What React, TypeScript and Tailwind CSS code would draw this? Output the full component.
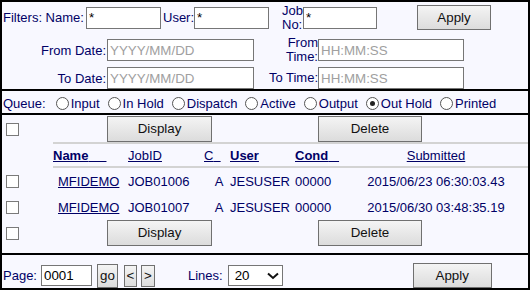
import React from "react";

function Btn({ children, className = "" }: { children: React.ReactNode; className?: string }) {
  return (
    <button
      type="button"
      className={`flex shrink-0 items-center justify-center border border-[#707070] bg-linear-to-b from-[#f4f4f4] to-[#dcdcdc] text-[13.333px] leading-none text-[#111] ${className}`}
    >
      {children}
    </button>
  );
}

function TextBox({ value, placeholder, className = "" }: { value?: string; placeholder?: string; className?: string }) {
  return (
    <input
      readOnly
      value={value ?? ""}
      placeholder={placeholder}
      className={`h-[22px] shrink-0 border border-[#767676] bg-white px-[2px] text-[13.333px] text-black outline-none placeholder:text-[#a0a0a0] ${className}`}
    />
  );
}

function Radio({ label, checked = false, first = false }: { label: string; checked?: boolean; first?: boolean }) {
  return (
    <span className={`flex items-center ${first ? "ml-[10px]" : "ml-[8px]"}`}>
      <span className="flex h-[13px] w-[13px] items-center justify-center rounded-full border border-[#555] bg-white">
        {checked && <span className="block h-[5px] w-[5px] rounded-full bg-[#222]" />}
      </span>
      <span className="ml-[2px]">{label}</span>
    </span>
  );
}

function Check() {
  return <span className="block h-[13px] w-[13px] border border-[#7a7a7a] bg-white" />;
}

function ButtonRow({ top = false }: { top?: boolean }) {
  return (
    <div className={`flex items-center ${top ? "h-[27px] pt-[1px]" : "h-[26px]"}`}>
      <div className="flex w-[105px] shrink-0 pl-[4px]">
        <Check />
      </div>
      <Btn className="h-[26px] w-[105px]">Display</Btn>
      <Btn className="ml-[106px] h-[26px] w-[104px]">Delete</Btn>
    </div>
  );
}

const rows = [
  { name: "MFIDEMO", job: "JOB01006", c: "A", user: "JESUSER", cond: "00000", sub: "2015/06/23 06:30:03.43" },
  { name: "MFIDEMO", job: "JOB01007", c: "A", user: "JESUSER", cond: "00000", sub: "2015/06/30 03:48:35.19" },
];

export default function App() {
  return (
    <div className="h-[290px] w-[530px] bg-white font-['Liberation_Sans',Arial,sans-serif] text-[13px] leading-[15px] text-[#000066]">
      <div className="flex h-[290px] w-[530px] flex-col border-2 border-black bg-[#f8f8ff]">
        {/* Filters */}
        <div className="h-[89px] shrink-0 border-b-2 border-black">
          <div className="flex h-[31px] items-center">
            <span className="w-[84px] shrink-0 pl-[1px]">Filters: Name:</span>
            <TextBox value="*" className="w-[75px]" />
            <span className="ml-[2px] w-[31px] shrink-0">User:</span>
            <TextBox value="*" className="w-[75px]" />
            <span className="ml-[11px] w-[23px] shrink-0 pl-[2px] leading-[14px]">Job No:</span>
            <TextBox value="*" className="w-[74px]" />
            <Btn className="ml-[40px] h-[25px] w-[74px]">Apply</Btn>
          </div>
          <div className="flex h-[34px] items-center">
            <span className="w-[105px] shrink-0 pr-[1px] text-right">From Date:</span>
            <TextBox placeholder="YYYY/MM/DD" className="w-[147px]" />
            <span className="ml-[10px] w-[54px] shrink-0 text-right leading-[14px]">From Time:</span>
            <TextBox placeholder="HH:MM:SS" className="w-[146px]" />
          </div>
          <div className="flex h-[22px] items-center">
            <span className="w-[105px] shrink-0 pr-[1px] text-right">To Date:</span>
            <TextBox placeholder="YYYY/MM/DD" className="w-[147px]" />
            <span className="ml-[10px] w-[54px] shrink-0 text-right leading-[14px]">To Time:</span>
            <TextBox placeholder="HH:MM:SS" className="w-[146px]" />
          </div>
        </div>

        {/* Queue */}
        <div className="flex h-[24px] shrink-0 items-center border-b-2 border-black pt-[3px] pl-[1px]">
          <span>Queue:</span>
          <Radio label="Input" first />
          <Radio label="In Hold" />
          <Radio label="Dispatch" />
          <Radio label="Active" />
          <Radio label="Output" />
          <Radio label="Out Hold" checked />
          <Radio label="Printed" />
        </div>

        {/* Table */}
        <div className="h-[140px] shrink-0 border-b-2 border-black">
          <ButtonRow top />
          <div className="ml-[51px] flex h-[26px] items-center border-y-2 border-[#d3d3d3]">
            <span className="w-[75px] shrink-0 font-bold underline">Name{"\u00a0\u00a0\u00a0\u00a0\u00a0"}</span>
            <span className="w-[76px] shrink-0 underline">JobID</span>
            <span className="w-[26px] shrink-0 underline">C{"\u00a0\u00a0"}</span>
            <span className="w-[65px] shrink-0 font-bold underline">User</span>
            <span className="w-[72px] shrink-0 font-bold underline">Cond{"\u00a0\u00a0\u00a0"}</span>
            <span className="w-[138px] shrink-0 text-center underline">Submitted</span>
          </div>
          {rows.map((r) => (
            <div key={r.job} className="flex h-[26px] items-center">
              <div className="flex w-[51px] shrink-0 pl-[4px]">
                <Check />
              </div>
              <span className="w-[75px] shrink-0 pl-[5px] underline">{r.name}</span>
              <span className="w-[76px] shrink-0">{r.job}</span>
              <span className="w-[26px] shrink-0 pl-[4px] text-center">{r.c}</span>
              <span className="w-[65px] shrink-0">{r.user}</span>
              <span className="w-[72px] shrink-0">{r.cond}</span>
              <span className="w-[138px] shrink-0 text-center">{r.sub}</span>
            </div>
          ))}
          <ButtonRow />
        </div>

        {/* Paging */}
        <div className="flex flex-1 items-center pt-[8px] pl-[1px]">
          <span>Page:</span>
          <input
            readOnly
            value="0001"
            className="ml-[4px] h-[21px] w-[51px] border border-[#767676] bg-white px-[2px] text-[13.333px] text-black outline-none"
          />
          <Btn className="ml-[5px] h-[24px] w-[21px]">go</Btn>
          <Btn className="ml-[6px] h-[22px] w-[13px]">&lt;</Btn>
          <Btn className="ml-[4px] h-[22px] w-[14px]">&gt;</Btn>
          <span className="ml-[33px]">Lines:</span>
          <div className="ml-[5px] flex h-[21px] w-[55px] shrink-0 items-center justify-between border border-[#767676] bg-white pr-[3px] pl-[6px] text-[13.333px] text-black">
            <span>20</span>
            <svg width="12" height="8" viewBox="0 0 12 8" fill="none">
              <path d="M1 1.5 L6 6 L11 1.5" stroke="#111" strokeWidth="2" />
            </svg>
          </div>
          <Btn className="ml-[130px] h-[25px] w-[79px]">Apply</Btn>
        </div>
      </div>
    </div>
  );
}
